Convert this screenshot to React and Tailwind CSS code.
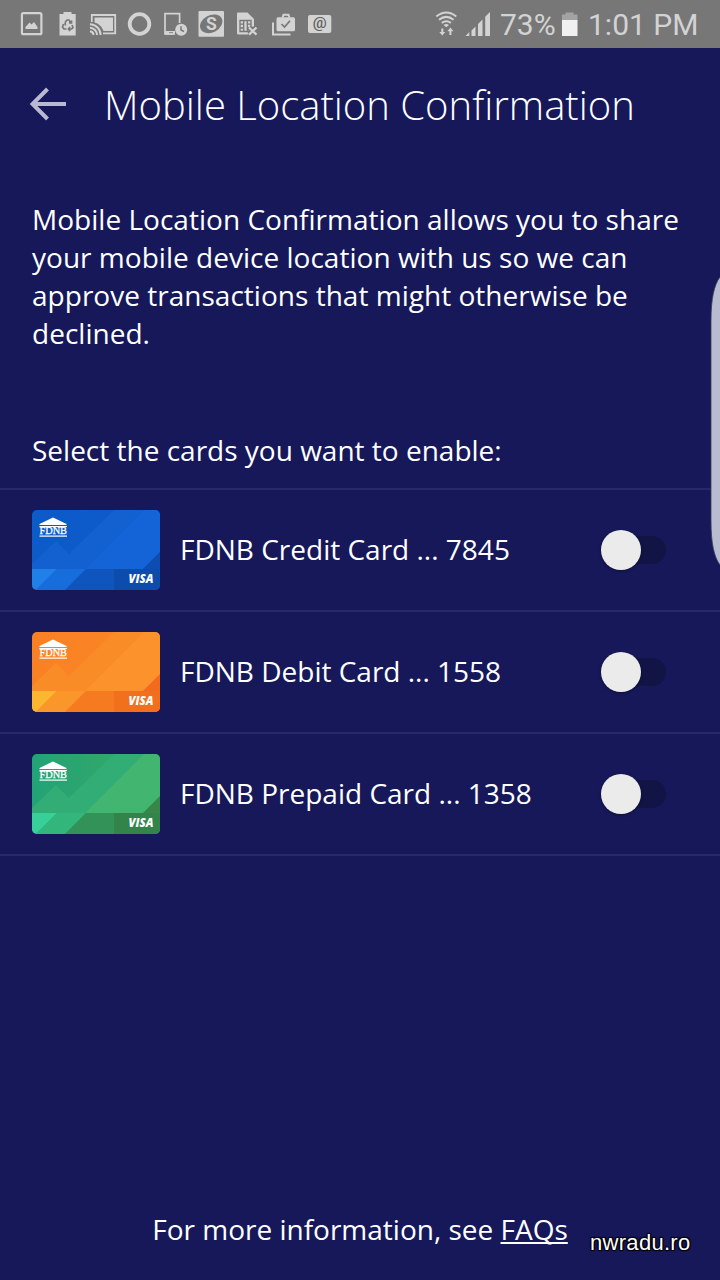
import { useState } from "react"

const cards = [
  {
    id: "7845",
    name: "FDNB Credit Card ... 7845",
    colors: { from: "#0b5bc8", to: "#1059cc", band: "#1361d0", light: "#1464d8", corner: "#0d4cb0", glow: "#1f80e8", mid: "#176ddb", low: "#0e55bd", lowest: "#0c4cac" },
  },
  {
    id: "1558",
    name: "FDNB Debit Card ... 1558",
    colors: { from: "#f98124", to: "#f98727", band: "#fa8c28", light: "#fb922b", corner: "#f26a1e", glow: "#fdb62f", mid: "#fb972a", low: "#f67a20", lowest: "#f2701d" },
  },
  {
    id: "1358",
    name: "FDNB Prepaid Card ... 1358",
    colors: { from: "#22a377", to: "#3ba964", band: "#32ad75", light: "#42b570", corner: "#37874a", glow: "#38cf98", mid: "#32b67c", low: "#339257", lowest: "#33844a" },
  },
]

function CardArt({ id, colors }) {
  return (
    <svg width="128" height="80" viewBox="0 0 128 80" className="shrink-0 rounded-[5px]">
      <defs>
        <linearGradient id={`base-${id}`} x1="0" y1="0" x2="1" y2="0">
          <stop offset="0" stopColor={colors.from} />
          <stop offset="1" stopColor={colors.to} />
        </linearGradient>
      </defs>
      <rect width="128" height="80" fill={`url(#base-${id})`} />
      <path d="M0 54 24 31 37 44 82 0H112L53 59H0Z" fill={colors.band} />
      <path d="M112 0H128V42L111 59H53Z" fill={colors.light} />
      <path d="M128 42V80H100V59H111Z" fill={colors.corner} />
      <path d="M0 59H25L4 80H0Z" fill={colors.glow} />
      <path d="M25 59H54L33 80H4Z" fill={colors.mid} />
      <path d="M54 59H82V80H33Z" fill={colors.low} />
      <path d="M82 59H128V80H82Z" fill={colors.lowest} />
      <g fill="#fff">
        <path d="M7.500 14 21 7.500 34.500 14V15H7.500Z" />
        <rect x="7.500" y="16" width="27.500" height="1" />
        <rect x="7.500" y="25.500" width="27.500" height="1.200" />
        <text x="7.500" y="24.200" fontFamily="Liberation Serif, serif" fontSize="11.300" stroke="#fff" strokeWidth="0.300" textLength="27.500" lengthAdjust="spacingAndGlyphs">FDNB</text>
        <text x="96.500" y="73.300" fontFamily="Open Sans, sans-serif" fontSize="11.800" fontWeight="800" fontStyle="italic" textLength="25" lengthAdjust="spacingAndGlyphs">VISA</text>
      </g>
    </svg>
  )
}

function StatusBar() {
  return (
    <div className="h-12 bg-[#777777] flex items-center text-[#d3d3d3]">
      {/* gallery */}
      <svg width="50" height="48" viewBox="0 0 50 48" fill="currentColor">
        <rect x="21.900" y="13.200" width="19.500" height="21" rx="1.500" fill="none" stroke="currentColor" strokeWidth="2.200" />
        <path d="M25.500 29V27L29.500 22.500 31.500 24.500 34 22 37.500 27V29Z" />
      </svg>
      {/* battery saver */}
      <svg width="34" height="48" viewBox="50 0 34 48" fill="currentColor">
        <path d="M59.500 14H63.500V12H71.500V14H75.700V35.500H59.500Z" />
        <g fill="none" stroke="#777777" strokeWidth="1.700">
          <path d="M65 22.500 67 20H69L71 23M69 23H71.500V20.500" />
          <path d="M63.500 24 62.500 27 64 29H66.500M65 22.500 65.500 25.500" />
          <path d="M72 25 73 27.500 71.500 29H68.500M70 27 68.500 29 70 31" />
        </g>
      </svg>
      {/* cast */}
      <svg width="38" height="48" viewBox="84 0 38 48" fill="currentColor">
        <path d="M91.800 22V15H115.200V33.300H103" fill="none" stroke="currentColor" strokeWidth="1.800" />
        <path d="M94.500 17.500H113V31H103.500C102 26.500 98.500 23.500 94.500 22.500Z" />
        <g fill="none" stroke="currentColor" strokeWidth="1.900">
          <path d="M90 31.200A4 4 0 0 1 93.500 35" />
          <path d="M90 27.800A7.200 7.200 0 0 1 97 35" />
          <path d="M90 24.300A10.700 10.700 0 0 1 100.600 35" />
        </g>
      </svg>
      {/* circle */}
      <svg width="34" height="48" viewBox="122 0 34 48">
        <circle cx="139.500" cy="24" r="9.800" fill="none" stroke="currentColor" strokeWidth="3.800" />
      </svg>
      {/* device clock */}
      <svg width="36" height="48" viewBox="156 0 36 48" fill="currentColor">
        <path d="M179.600 23V13.600H165V34H173.500" fill="none" stroke="currentColor" strokeWidth="1.700" />
        <path d="M165 31H175V34.700H165ZM169 32.200V33.600H173V32.200Z" fillRule="evenodd" />
        <circle cx="181.200" cy="29.800" r="6" />
        <path d="M181 26.200V30L184 31.500" fill="none" stroke="#777777" strokeWidth="1.500" />
      </svg>
      {/* S badge */}
      <svg width="38" height="48" viewBox="192 0 38 48">
        <rect x="198.500" y="11" width="25.500" height="25.800" rx="1" fill="currentColor" />
        <ellipse cx="211.200" cy="23.800" rx="11.800" ry="8.600" fill="#777777" transform="rotate(-28 211.200 23.800)" />
        <text x="211.300" y="30" textAnchor="middle" fill="currentColor" fontFamily="Roboto, sans-serif" fontSize="17.500" fontWeight="700">S</text>
      </svg>
      {/* sim removed */}
      <svg width="34" height="48" viewBox="230 0 34 48">
        <path d="M238 12.500H247.500L254 19V26.500L248.500 27V34.500H238.500Q237 34.500 237 33V13.500Q237 12.500 238 12.500Z" fill="currentColor" />
        <path d="M240 20.500H251V31.500H240ZM243.700 20.500V31.500M247.300 20.500V31.500M240 24.200H243.700M240 28H243.700M247.300 24.200H251M247.300 28H251" fill="none" stroke="#777777" strokeWidth="1.300" />
        <path d="M249 27.500 256.500 34.700M256.500 27.500 249 34.700" stroke="#777777" strokeWidth="4.500" />
        <path d="M249 27.500 256.500 34.700M256.500 27.500 249 34.700" stroke="currentColor" strokeWidth="2.300" />
      </svg>
      {/* installed apps */}
      <svg width="38" height="48" viewBox="264 0 38 48">
        <rect x="276.500" y="17.200" width="18.500" height="14" rx="1.500" fill="currentColor" />
        <path d="M282.500 17.500 283.500 14.800H288.500L289.500 17.500M273 22.500V34.500H290.500" fill="none" stroke="currentColor" strokeWidth="2" />
        <path d="M281.500 24 284.500 27 290 20.800" fill="none" stroke="#777777" strokeWidth="1.700" />
      </svg>
      {/* mail */}
      <svg width="38" height="48" viewBox="302 0 38 48">
        <rect x="308" y="15" width="23.300" height="18" rx="2" fill="currentColor" />
        <text x="319.600" y="28.400" textAnchor="middle" fill="#606060" fontFamily="Roboto, sans-serif" fontSize="15.500" fontWeight="500">@</text>
      </svg>
      {/* wifi */}
      <svg width="30" height="48" viewBox="432 0 30 48" className="ml-auto">
        <g fill="none" stroke="currentColor" strokeWidth="2">
          <path d="M436.300 16.500Q446.300 8.500 456.300 16.500M439 19.700Q446.300 14 453.600 19.700M441.800 22.900Q446.300 19.500 450.800 22.900" />
          <path d="M442.300 28.500V33M450.400 35V30" />
        </g>
        <path d="M443.500 25Q446.300 23 449 25L446.300 27.300ZM439.300 32H445.300L442.300 35.500ZM447.400 31.300H453.400L450.400 27.500Z" fill="currentColor" />
      </svg>
      {/* signal */}
      <svg width="38" height="48" viewBox="462 0 38 48" fill="currentColor">
        <path d="M465.500 36 469.300 32V36ZM471.500 30.500 475.500 26.500V36H471.500ZM478 24 482.500 19.500V36H478ZM485.200 16.800 490 12V36H485.200Z" />
      </svg>
      <div className="w-[60px] font-['Roboto',sans-serif] text-[30px] whitespace-nowrap">73%</div>
      <svg width="28" height="48" viewBox="560 0 28 48">
        <path d="M562 14.500H565.500V12.500H573.500V14.500H577.500V21H562Z" fill="#a3a3a3" />
        <rect x="562" y="20" width="15.500" height="16" fill="#f0f0f0" />
      </svg>
      <div className="w-[132px] font-['Roboto',sans-serif] text-[30px] whitespace-nowrap">1:01 PM</div>
    </div>
  )
}

function Toggle({ checked, onChange, label }) {
  return (
    <button
      role="switch"
      aria-checked={checked}
      aria-label={label}
      onClick={onChange}
      className={`ml-auto mr-[54px] w-[65px] h-10 flex items-center ${checked ? "flex-row-reverse" : ""}`}
    >
      <span className="size-10 rounded-full bg-[#ebebeb] shadow-[0_1px_3px_rgba(0,0,0,0.35)] z-10 shrink-0" />
      <span className="-ml-5 w-[45px] h-7 rounded-full bg-[#121445] shrink-0" />
    </button>
  )
}

export default function App() {
  const [enabled, setEnabled] = useState({})

  const toggleCard = (id) => {
    setEnabled((prev) => ({ ...prev, [id]: !prev[id] }))
  }

  return (
    <div className="relative w-[720px] h-[1280px] overflow-hidden bg-[#161859] text-white font-['Open_Sans',sans-serif] flex flex-col">
      <StatusBar />

      <header className="h-28 flex items-center pl-[30px]">
        <svg width="38" height="34" viewBox="0 0 38 34" fill="none" stroke="#b9bad2" strokeWidth="4">
          <path d="M36 17H3M17.500 2 2.500 17 17.500 32" />
        </svg>
        <h1 className="ml-9 pt-[2px] text-[40px] font-light whitespace-nowrap">Mobile Location Confirmation</h1>
      </header>

      <p className="mt-10 ml-8 text-[28px] leading-[38px] tracking-[0.02px] whitespace-nowrap">
        Mobile Location Confirmation allows you to share
        <br />
        your mobile device location with us so we can
        <br />
        approve transactions that might otherwise be
        <br />
        declined.
      </p>

      <h2 className="mt-[79px] ml-8 text-[28px] leading-[38px]">Select the cards you want to enable:</h2>

      <ul className="mt-[19px] border-t-2 border-[#272a68]">
        {cards.map((card) => (
          <li key={card.id} className="h-[122px] pl-8 pb-px flex items-center border-b-2 border-[#272a68]">
            <CardArt id={card.id} colors={card.colors} />
            <span className="ml-5 pb-[2px] text-[28px] leading-[38px]">{card.name}</span>
            <Toggle checked={!!enabled[card.id]} onChange={() => toggleCard(card.id)} label={card.name} />
          </li>
        ))}
      </ul>

      <footer className="mt-auto mb-8 text-center text-[28px] leading-[38px]">
        For more information, see{" "}
        <a href="#faqs" className="underline decoration-[1.5px] underline-offset-[2px] [text-decoration-skip-ink:none]">FAQs</a>
      </footer>

      {/* edge panel handle */}
      <svg width="10" height="292" viewBox="0 0 10 292" className="absolute right-0 top-[275px]">
        <path d="M10 2C4 10 1 24 1 46V246C1 268 4 282 10 290Z" fill="#b9bbd0" />
        <path d="M10 2C4 10 1 24 1 46V246C1 268 4 282 10 290" fill="none" stroke="#3a3b5c" strokeWidth="0.800" />
      </svg>
      <div className="absolute left-[590px] top-[1229px] font-['Liberation_Sans',sans-serif] text-[22px] leading-7 tracking-[0.3px] [text-shadow:1px_1px_1px_#000,-1px_-1px_1px_#000,1px_-1px_1px_#000,-1px_1px_1px_#000]">
        nwradu.ro
      </div>
    </div>
  )
}
